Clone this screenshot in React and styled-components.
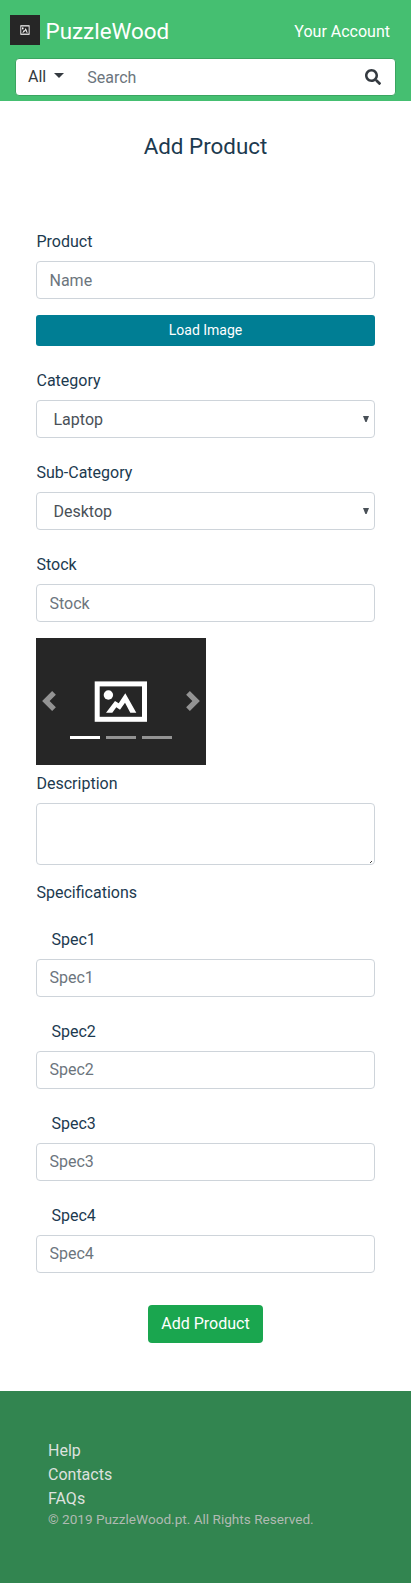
import React from "react";
import styled, { createGlobalStyle } from "styled-components";
import { FaSearch } from "react-icons/fa";

const Global = createGlobalStyle`
  *, *::before, *::after { box-sizing: border-box; }
  body { margin: 0; font: 400 16px/24px Roboto, sans-serif; color: #1c3a4f; background: #fff; }
  input, textarea, select, button { font: inherit; margin: 0; }
  svg { display: block; }
`;
const Header = styled.header`height: 101px; background: #45bf71; padding: 15px 10px 0;`;
const TopRow = styled.div`display: flex; align-items: center; height: 30px; color: #fff;`;
const Brand = styled.div`font-size: 22.4px; margin-left: 5.5px; padding-top: 2px; flex: 1; line-height: 32px;`;
const Account = styled.div`padding: 3px 11px 0 0;`;
const Search = styled.div`
  display: flex; align-items: center; height: 38px; margin: 13px 5px 0; background: #fff;
  border: 1px solid #3aa560; border-radius: 4px; padding: 0 14px 0 12px; color: #343a40;
`;
const Caret = styled.span`
  border: 5px solid transparent; border-top-color: #343a40; border-bottom: 0;
  margin: 0 0 3px 8px;
`;
const SearchInput = styled.input`
  border: 0; outline: 0; padding: 2px 0 0; margin-left: 23px; flex: 1; min-width: 0; background: none;
  &::placeholder { color: #6c757d; opacity: 1; }
`;
const Title = styled.h1`
  font-size: 22.4px; font-weight: 400; line-height: 28px; text-align: center; margin: 31px 0 69px;
`;
const Form = styled.form`padding: 0 36px;`;
const Group = styled.div`margin-bottom: ${p => p.$gap ?? 22}px;`;
const Label = styled.label`
  display: block; height: 24px; margin-bottom: 8px;
  padding: 1px 0 0 ${p => (p.$inset ? 15.5 : 0.5)}px;
`;
const Input = styled.input`
  display: block; width: 100%; height: 38px; padding: ${p => (p.$raised ? "5px 12.5px 7px" : "6px 12.5px")};
  border: 1px solid #ced4da; border-radius: 4px; background: #fff; color: #495057; outline: 0;
  &::placeholder { color: #6c757d; opacity: 1; }
`;
const SelectWrap = styled.div`position: relative;`;
const SelectBox = styled(Input).attrs({ as: "select" })`appearance: none; padding: 7px 16.5px 5px;`;
const SelectArrow = styled.svg`position: absolute; right: 6px; top: 16px; pointer-events: none;`;
const Load = styled.button`
  display: block; width: 100%; height: 31px; margin-bottom: 22px; padding: 0 0 1px; border: 0;
  border-radius: 3px; background: #007e94; color: #fff; font-size: 14px;
`;
const Carousel = styled.div`
  position: relative; width: 170px; height: 127px; margin-bottom: 6px; background: #262626;
`;
const Control = styled.svg`
  position: absolute; top: 53px; opacity: 0.5;
  ${p => (p.$next ? "right: 3px;" : "left: 3px;")}
`;
const Indicators = styled.div`
  position: absolute; left: 34px; top: 98px; display: flex; gap: 6px;
`;
const Indicator = styled.span`
  width: 30px; height: 3px; background: #fff; opacity: ${p => (p.$active ? 1 : 0.5)};
`;
const AreaWrap = styled.div`position: relative;`;
const Area = styled.textarea`
  display: block; width: 100%; height: 62px; padding: 6px 12px; border: 1px solid #ced4da;
  border-radius: 4px; resize: none; outline: 0;
`;
const Grip = styled.svg`position: absolute; right: 3px; bottom: 2px; pointer-events: none;`;
const Submit = styled.button`
  display: block; height: 38px; padding: 0 13px; margin: 32px auto 48px; border: 0;
  border-radius: 4px; background: #1aa64f; color: #fff;
`;
const Footer = styled.footer`
  height: 192px; background: #328550; color: #dde1de; padding: 48px;
`;
const FooterLink = styled.div`height: 24px;`;
const Copy = styled.div`font-size: 13.6px; line-height: 16px; color: #b0bab2; white-space: nowrap;`;

const Placeholder = ({ width, height }) => (
  <svg width={width} height={height} viewBox="0 0 170 127" preserveAspectRatio="none">
    <rect width="170" height="127" fill="#262626" />
    <rect x="61.2" y="45.9" width="47.3" height="35.4" fill="none" stroke="#fff" strokeWidth="5" />
    <circle cx="72.4" cy="57" r="4.7" fill="#fff" />
    <path d="M70 74.7L79 63L82.7 65.3L89.3 55.3L100.3 74.7H94.3L89 64.7L84 71.7L80.3 69.3L76.3 74.7Z" fill="#fff" />
  </svg>
);

const Field = ({ label, inset, gap }) => (
  <Group $gap={gap}>
    <Label $inset={inset}>{label}</Label>
    <Input $raised={inset} placeholder={label} />
  </Group>
);

const SelectField = ({ label, value }) => (
  <Group>
    <Label>{label}</Label>
    <SelectWrap>
      <SelectBox><option>{value}</option></SelectBox>
      <SelectArrow width="6" height="6" viewBox="0 0 6 6"><path d="M0 0H6L3.6 6H2.4Z" fill="#495057" /></SelectArrow>
    </SelectWrap>
  </Group>
);

export default function App() {
  return (
    <>
      <Global />
      <Header>
        <TopRow>
          <Placeholder width={30} height={30} />
          <Brand>PuzzleWood</Brand>
          <Account>Your Account</Account>
        </TopRow>
        <Search>
          All<Caret />
          <SearchInput placeholder="Search" />
          <FaSearch size={16} />
        </Search>
      </Header>
      <Title>Add Product</Title>
      <Form>
        <Group $gap={16}>
          <Label>Product</Label>
          <Input placeholder="Name" />
        </Group>
        <Load type="button">Load Image</Load>
        <SelectField label="Category" value="Laptop" />
        <SelectField label="Sub-Category" value="Desktop" />
        <Field label="Stock" gap={16} />
        <Carousel>
          <Placeholder width={170} height={127} />
          <Control width="20" height="20" viewBox="0 0 8 8">
            <path d="M5.25 0l-4 4 4 4 1.5-1.5-2.5-2.5 2.5-2.5-1.5-1.5z" fill="#fff" />
          </Control>
          <Control $next width="20" height="20" viewBox="0 0 8 8">
            <path d="M2.75 0l-1.5 1.5 2.5 2.5-2.5 2.5 1.5 1.5 4-4-4-4z" fill="#fff" />
          </Control>
          <Indicators><Indicator $active /><Indicator /><Indicator /></Indicators>
        </Carousel>
        <Group $gap={15}>
          <Label>Description</Label>
          <AreaWrap>
            <Area />
            <Grip width="2" height="2"><path d="M1 0h1v1H1zM0 1h1v1H0z" fill="#444" /></Grip>
          </AreaWrap>
        </Group>
        <Group $gap={23}><Label>Specifications</Label></Group>
        {[1, 2, 3, 4].map(n => (
          <Field key={n} label={`Spec${n}`} inset gap={n === 4 ? 32 : 22} />
        ))}
        <Submit type="button">Add Product</Submit>
      </Form>
      <Footer>
        <FooterLink>Help</FooterLink>
        <FooterLink>Contacts</FooterLink>
        <FooterLink>FAQs</FooterLink>
        <Copy>© 2019 PuzzleWood.pt. All Rights Reserved.</Copy>
      </Footer>
    </>
  );
}
